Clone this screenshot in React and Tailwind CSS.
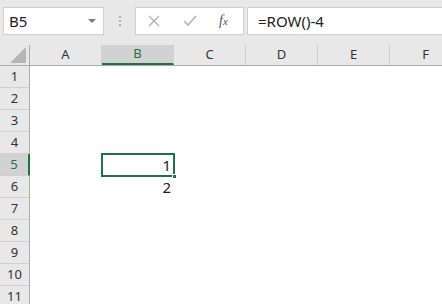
import React from 'react';

const cols = ['A', 'B', 'C', 'D', 'E', 'F'];
const rows = [1, 2, 3, 4, 5, 6, 7, 8, 9, 10, 11];
const values = { 'B5': '1', 'B6': '2' };

const App = () => {
    return (
        <div className="w-[442px] h-[304px] overflow-hidden bg-white text-[#222] font-['Noto_Sans','Open_Sans',sans-serif]">
            {/* formula bar */}
            <div className="h-[45px] bg-[#e8e8e8] flex items-start pt-[7px] pl-[3px]">
                <div className="w-[101px] h-[28px] bg-white border border-[#d0d0d0] flex items-center justify-between pl-[5px] pr-[7px]">
                    <span className="text-[15px] leading-none">B5</span>
                    <svg width="8" height="5" viewBox="0 0 8 5">
                        <path d="M0 0 L8 0 L4 4 Z" fill="#7a7a7a" />
                    </svg>
                </div>
                <div className="w-[31px] h-[28px] flex flex-col items-center justify-center gap-[2px]">
                    <span className="w-[2px] h-[2px] bg-[#b0b0b0]" />
                    <span className="w-[2px] h-[2px] bg-[#b0b0b0]" />
                    <span className="w-[2px] h-[2px] bg-[#b0b0b0]" />
                </div>
                <div className="w-[109px] h-[28px] bg-white border border-[#d0d0d0] flex items-center">
                    <svg className="ml-[12px]" width="12" height="12" viewBox="0 0 12 12">
                        <path d="M1 1 L11 11 M11 1 L1 11" stroke="#b4b4b4" strokeWidth="1.4" />
                    </svg>
                    <svg className="ml-[23px]" width="14" height="12" viewBox="0 0 14 12">
                        <path d="M1 6 L5 10 L13 1" stroke="#b4b4b4" strokeWidth="1.6" fill="none" />
                    </svg>
                    <span className="ml-[22px] text-[14px] italic text-[#555] font-['Liberation_Serif',serif] leading-none">
                        f<span className="text-[11px]">x</span>
                    </span>
                </div>
                <div className="flex-1 ml-[3px] h-[28px] bg-white border-y border-l border-[#d0d0d0] flex items-center pl-[10px]">
                    <span className="text-[15px] leading-none">=ROW()-4</span>
                </div>
            </div>

            {/* column headers */}
            <div className="flex h-[21px] bg-[#e8e8e8] border-b border-[#ababab]">
                <div className="w-[30px] shrink-0 border-r border-[#ababab] flex items-end justify-end pr-[3px] pb-[2px]">
                    <svg width="16" height="16" viewBox="0 0 16 16">
                        <path d="M16 0 L16 16 L0 16 Z" fill="#b5b5b5" />
                    </svg>
                </div>
                {cols.map((c) => (
                    <div
                        key={c}
                        className={`w-[72px] shrink-0 flex items-center justify-center text-[13px] border-r border-[#d0d0d0] ${c === 'B'
                                ? 'bg-[#d2d2d2] text-[#217346] border-b-2 border-b-[#217346]'
                                : 'text-[#333]'
                            }`}
                    >
                        {c}
                    </div>
                ))}
            </div>

            {/* rows */}
            {rows.map((r) => (
                <div key={r} className="flex h-[22px]">
                    <div
                        className={`w-[30px] shrink-0 flex items-center justify-center text-[13px] border-b border-[#d0d0d0] ${r === 5
                                ? 'bg-[#d2d2d2] text-[#217346] border-r-2 border-r-[#217346]'
                                : 'bg-[#e8e8e8] text-[#333] border-r border-r-[#ababab]'
                            }`}
                    >
                        {r}
                    </div>
                    {cols.map((c) => {
                        const key = c + r;
                        return (
                            <div key={c} className="relative w-[72px] shrink-0 flex items-center justify-end pr-[3px] text-[15px]">
                                {values[key]}
                                {key === 'B5' && (
                                    <>
                                        <div className="absolute -left-[1px] -top-[1px] w-[74px] h-[24px] border-2 border-[#217346]" />
                                        <div className="absolute -right-[3px] -bottom-[3px] w-[5px] h-[5px] bg-[#217346] border border-white" />
                                    </>
                                )}
                            </div>
                        );
                    })}
                </div>
            ))}
        </div>
    );
};

export default App;
